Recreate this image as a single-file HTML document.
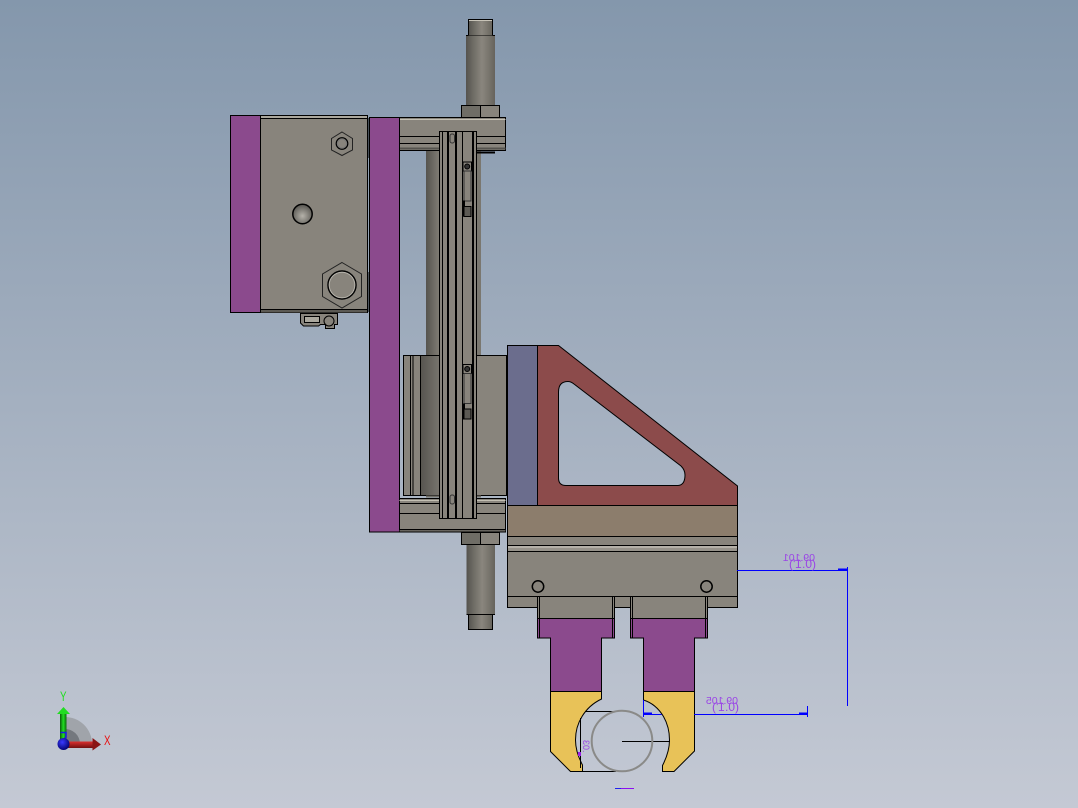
<!DOCTYPE html>
<html><head><meta charset="utf-8"><style>
html,body{margin:0;padding:0;width:1078px;height:808px;overflow:hidden;background:#a4afbf}
svg{display:block}
</style></head><body>
<svg xmlns="http://www.w3.org/2000/svg" width="1078" height="808" viewBox="0 0 1078 808">
<defs>
<linearGradient id="bg" x1="0" y1="0" x2="0" y2="1"><stop offset="0" stop-color="#8497ac"/><stop offset="1" stop-color="#c4c9d4"/></linearGradient>
<linearGradient id="rod" x1="0" y1="0" x2="1" y2="0"><stop offset="0" stop-color="#55534e"/><stop offset=".25" stop-color="#6e6c65"/><stop offset=".55" stop-color="#8a867e"/><stop offset=".8" stop-color="#77746c"/><stop offset="1" stop-color="#66635c"/></linearGradient>
<linearGradient id="rod2" x1="0" y1="0" x2="1" y2="0"><stop offset="0" stop-color="#55534e"/><stop offset=".25" stop-color="#827e76"/><stop offset="1" stop-color="#7a776f"/></linearGradient>
<linearGradient id="blk" x1="0" y1="0" x2="1" y2="0"><stop offset="0" stop-color="#55534e"/><stop offset="1" stop-color="#85817a"/></linearGradient>
<radialGradient id="dome" cx=".5" cy=".6" r=".6"><stop offset="0" stop-color="#b5b2aa"/><stop offset="1" stop-color="#55534e"/></radialGradient>
<linearGradient id="gy" x1="0" y1="0" x2="1" y2="0"><stop offset="0" stop-color="#0a5a0a"/><stop offset=".5" stop-color="#22dd22"/><stop offset="1" stop-color="#0a6a0a"/></linearGradient>
<linearGradient id="rx" x1="0" y1="0" x2="0" y2="1"><stop offset="0" stop-color="#dd3030"/><stop offset="1" stop-color="#701010"/></linearGradient>
<radialGradient id="ball" cx=".4" cy=".35" r=".7"><stop offset="0" stop-color="#3a3aff"/><stop offset="1" stop-color="#00006a"/></radialGradient>
</defs>
<rect width="1078" height="808" fill="url(#bg)"/>

<g stroke="#000" stroke-width="1">
<!-- upper rod -->
<rect x="468.500" y="19.500" width="24" height="16" fill="url(#rod)"/>
<rect x="466" y="35.500" width="29" height="70" fill="url(#rod)" stroke="none"/>
<path d="M466 35.500h2.500M492.500 35.500h2.500" fill="none"/>
<path d="M469 20.500h23" stroke="#c8c4b8" fill="none"/>
<rect x="461.500" y="105.500" width="19" height="12" fill="#6f6d66"/>
<rect x="480.500" y="105.500" width="19" height="12" fill="#88847c"/>
<!-- rod behind -->
<rect x="426" y="150" width="55" height="206" fill="url(#rod2)" stroke="none"/>
<!-- lower rod -->
<rect x="466.500" y="544" width="28.500" height="70" fill="url(#rod)" stroke="none"/>
<rect x="468.500" y="614.500" width="24" height="15" fill="url(#rod)"/>
<path d="M466.500 614.500h2M492.500 614.500h2.500" fill="none"/>
<rect x="461.500" y="532.500" width="19" height="12" fill="#6f6d66"/>
<rect x="480.500" y="532.500" width="19" height="12" fill="#88847c"/>

<!-- top bracket -->
<rect x="399.500" y="117.500" width="106" height="33" fill="#88847c"/>
<path d="M399.500 119.500h106" stroke="#c4c0b4"/>
<path d="M399.500 136.500h106M399.500 143.500h106" fill="none"/>
<path d="M399.500 148.500h106" stroke="#55534e" stroke-width="2"/>
<path d="M477 152.500h18" stroke-width="2" fill="none"/>

<!-- box -->
<rect x="260.500" y="115.500" width="107" height="197" fill="#88847c"/>
<rect x="261" y="116" width="106" height="2.500" fill="#aaa79d" stroke="none"/>
<path d="M260.500 118.500h107" fill="none"/>
<rect x="261" y="309.500" width="106" height="3" fill="#5c5a54" stroke="none"/>
<path d="M260.500 309.500h107" fill="none"/>
<rect x="230.500" y="115.500" width="30" height="197" fill="#8b4a8d"/>
<path d="M368 118v40M368 272v40" fill="none" stroke-width="1"/>
<!-- hex small -->
<path d="M342 132.500l10.500 6.500v11.500l-10.500 5.500-10.500-5.500v-11.500z" fill="none" stroke="#222" transform="translate(0,-.5)"/>
<circle cx="342" cy="143.500" r="5.800" fill="none" stroke-width="1.200"/>
<circle cx="342" cy="143.500" r="4.500" fill="none" stroke="#777"/>
<!-- dome -->
<circle cx="302.500" cy="214" r="9.700" fill="url(#dome)" stroke-width="1.500"/>
<!-- hex big -->
<path d="M342 262.500l19.500 11.500v22.500l-19.500 11.500-19.500-11.500v-22.500z" fill="none" stroke="#222"/>
<circle cx="342" cy="285" r="14" fill="none" stroke-width="1.500"/>
<circle cx="342" cy="285" r="12.800" fill="none" stroke="#b5b2aa"/>
<!-- clip -->
<path d="M300.500 313.500h37v11h-3v4h-9v-4h-5l-2 1.500h-15l-3-3z" fill="#88847c"/>
<rect x="304.500" y="316.500" width="15" height="6" fill="#aaa79d"/>
<circle cx="329" cy="321" r="5" fill="none"/>

<!-- plate -->
<rect x="369.500" y="117.500" width="30" height="414.500" fill="#8b4a8d"/>

<!-- block -->
<rect x="403.500" y="355.500" width="103" height="140" fill="#88847c"/>
<rect x="420" y="356" width="27" height="139" fill="url(#blk)" stroke="none"/>
<path d="M410.500 355.500v140M413 355.500v140M420.500 355.500v140M403 495.500h104" fill="none"/>
<path d="M477 355.500h29" fill="none"/>
<path d="M426 496.500h55" stroke="#6f6d66" stroke-width="2" fill="none"/>

<!-- lower bracket -->
<rect x="399.500" y="498.500" width="106" height="33.500" fill="#88847c"/>
<path d="M399.500 500.500h106" stroke="#c4c0b4"/>
<path d="M399.500 503.500h106M399.500 513.500h106M399.500 529.500h106" fill="none"/>
<path d="M399.500 530.700h106" stroke="#5c5a54" fill="none"/>

<!-- rail -->
<rect x="439.500" y="131.500" width="37" height="387" fill="#88847c"/>
<g fill="none">
<path d="M442.500 131.500v387M462.500 131.500v387"/>
<path d="M448 131.500v387M456 131.500v387M473 131.500v387" stroke-width="2"/>
</g>
<rect x="450" y="134" width="4.500" height="9" rx="2" fill="none" stroke="#333"/>
<rect x="450" y="495" width="4.500" height="9" rx="2" fill="none" stroke="#333"/>
<!-- slots -->
<g fill="#88847c">
<rect x="463" y="162" width="8.500" height="9"/>
<circle cx="467.200" cy="166.500" r="2.500" fill="#333"/>
<rect x="464" y="171" width="7" height="30" fill="none" stroke="#333"/>
<rect x="463" y="201" width="1.500" height="15" fill="#000"/>
<rect x="464" y="206.500" width="7" height="10" fill="#5c5a54"/>
<rect x="463" y="364.500" width="8.500" height="9"/>
<circle cx="467.200" cy="369" r="2.500" fill="#333"/>
<rect x="464" y="373.500" width="7" height="30" fill="none" stroke="#333"/>
<rect x="463" y="404" width="1.500" height="15" fill="#000"/>
<rect x="464" y="409" width="7" height="10" fill="#5c5a54"/>
</g>

<!-- blue plate, gusset -->
<path d="M537.500 486l10 19h-10z" fill="#a4afbf" stroke="none"/>
<rect x="507.500" y="345.500" width="30" height="160" fill="#6b6d8d"/>
<path fill-rule="evenodd" d="M537.500 345.500H558.500L737.500 486V505.500H537.500ZM558.500 392V478Q558.500 485.500 566 485.500H678Q685 485 685 475Q685 470 681 466L574 384Q571 381.500 568 381.500Q558.500 381.500 558.500 392Z" fill="#8c4b4b"/>

<!-- base -->
<rect x="507.500" y="505.500" width="230" height="31" fill="#8c7d6c"/>
<rect x="507.500" y="536.500" width="230" height="60" fill="#88847c"/>
<path d="M507.500 545.500h230M507.500 551.500h230" fill="none"/>
<rect x="508" y="546" width="229" height="2" fill="#b4b0a8" stroke="none"/>
<rect x="508" y="548" width="229" height="3" fill="#96928a" stroke="none"/>
<rect x="507.500" y="596.500" width="230" height="11" fill="#88847c"/>
<circle cx="538" cy="586.500" r="5.700" fill="none" stroke-width="1.500"/>
<circle cx="706.500" cy="586.500" r="5.700" fill="none" stroke-width="1.500"/>

<!-- fingers -->
<g fill="#88847c">
<rect x="537.500" y="596.500" width="77" height="22"/>
<rect x="630.500" y="596.500" width="77" height="22"/>
</g>
<g fill="#8b4a8d">
<path d="M537.500 618.500h77v19.500h-13v53.500h-51v-53.500h-13z"/>
<path d="M630.500 618.500h77v19.500h-13v53.500h-51v-53.500h-13z"/>
</g>
<path d="M539.500 596.500v41M612.500 596.500v41M632.500 596.500v41M705.500 596.500v41" fill="none"/>
<g fill="#e8c258">
<path d="M550.500 691.500H601.500V699Q589 705 582 716.500Q575.500 727 575.500 740Q575.500 752 582.500 765V771.500H570.500L550.500 751.500Z"/>
<path d="M643.500 691.500H694.500V751L674 771.500H662.500V765.500Q669.500 752 669.500 740Q669.500 727 663.500 716.500Q656 704 643.500 700Z"/>
</g>

<!-- sketch lines -->
<path d="M582 771.500h34M585 711.500h28M622 741.500h48M580.500 718v50" fill="none"/>
</g>
<circle cx="622" cy="741" r="30.300" fill="none" stroke="#8a8a88" stroke-width="2"/>

<!-- dimensions -->
<g fill="none" stroke="#0000ff" stroke-width="1">
<path d="M737 570.500h110M847.500 567v139" />
<path d="M838 569.500h9" stroke-width="2"/>
<path d="M694 714.500h113M807.500 706v11M643.500 700v17M643.500 714.500h18"/>
<path d="M799 713.500h8" stroke-width="2"/>
<path d="M644 713.500h8" stroke-width="2"/>
</g>
<g font-family="'Liberation Sans',sans-serif" fill="#9a45e6" font-size="10.500">
<text transform="translate(815,561) scale(-1,1)">09.101</text>
<text transform="translate(816,568) scale(-1,1)" font-size="12">(0.1')</text>
<text transform="translate(738,704) scale(-1,1)">09.105</text>
<text transform="translate(739,711) scale(-1,1)" font-size="12">(0.1')</text>
<text transform="translate(583,740) rotate(90) scale(-1,1)" font-size="9" text-anchor="end">.03</text>
</g>
<rect x="578" y="752" width="3" height="4" fill="#9a20e6"/>
<path d="M615 788.500h6" stroke="#2020ee" fill="none"/>
<path d="M621 788.500h13" stroke="#8a10f0" fill="none"/>

<!-- triad -->
<path d="M64 717a27 27 0 0 1 28 27l0 1.500h-28z" fill="#a0a4aa"/>
<path d="M64 729a15 15 0 0 1 16 15l0 1.500h-16z" fill="#74787e"/>
<rect x="60" y="713" width="6.500" height="30" fill="url(#gy)"/>
<path d="M63.500 707l6.500 7h-13z" fill="#22dd22"/>
<rect x="66" y="741.500" width="27" height="6.500" fill="url(#rx)"/>
<path d="M101 744.500l-8.500-6.500v12.500z" fill="#8a1515"/>
<path d="M60.500 732.500h5.500v5l-3 2" stroke="#1a1ae6" stroke-width="1.500" fill="none"/>
<circle cx="63.500" cy="744" r="6" fill="url(#ball)"/>
<text transform="translate(60,701) scale(.7,1)" font-family="'Liberation Sans',sans-serif" font-size="14" fill="#22dd22">Y</text>
<text transform="translate(104,745) scale(.7,1)" font-family="'Liberation Sans',sans-serif" font-size="14" fill="#e81010">X</text>
</svg>
</body></html>
